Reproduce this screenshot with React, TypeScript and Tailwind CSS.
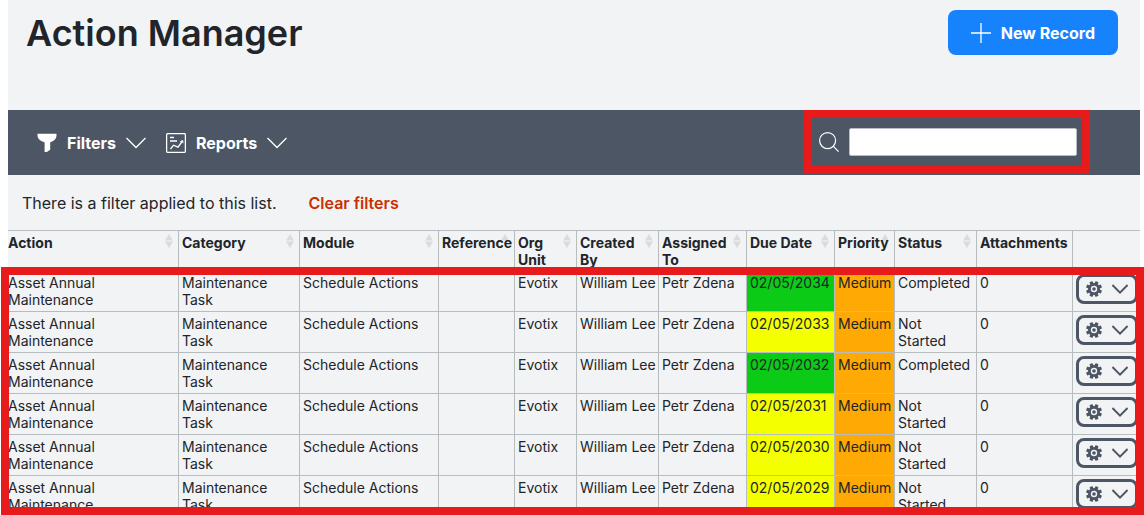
import React from "react";
import clsx from "clsx";

type Sort = "both" | "up" | "none";

const columns: { label: string; width: string; sort: Sort }[] = [
  { label: "Action", width: "w-auto", sort: "both" },
  { label: "Category", width: "w-[121px]", sort: "both" },
  { label: "Module", width: "w-[139px]", sort: "both" },
  { label: "Reference", width: "w-[76px]", sort: "up" },
  { label: "Org Unit", width: "w-[62px]", sort: "both" },
  { label: "Created By", width: "w-[82px]", sort: "both" },
  { label: "Assigned To", width: "w-[88px]", sort: "both" },
  { label: "Due Date", width: "w-[88px]", sort: "both" },
  { label: "Priority", width: "w-[60px]", sort: "up" },
  { label: "Status", width: "w-[82px]", sort: "both" },
  { label: "Attachments", width: "w-[96px]", sort: "none" },
];

const records = [
  { due: "02/05/2034", done: true },
  { due: "02/05/2033", done: false },
  { due: "02/05/2032", done: true },
  { due: "02/05/2031", done: false },
  { due: "02/05/2030", done: false },
  { due: "02/05/2029", done: false },
];

const border = "border-b border-r border-[#b7bcbe] last:border-r-0";
const cell = clsx(border, "p-[3px] align-top");
const headCell = clsx(border, "px-[3px] pt-[3px] pb-[2px] align-top");

const Chevron = ({ className }: { className: string }) => (
  <svg viewBox="0 0 20 20" className={className} fill="none" stroke="currentColor">
    <path d="M0.5 5 10 14.5 19.5 5" />
  </svg>
);

const Funnel = () => (
  <svg viewBox="0 0 20 20" className="size-5" fill="currentColor">
    <path d="M.5.8h19v1.400c0 3.600-2.600 6-6.300 7v7.600L9.800 19H7.600V9.200C3.500 8.200.5 5.800.5 2.200z" />
  </svg>
);

const ReportIcon = () => (
  <svg viewBox="0 0 20 20" className="size-5" fill="none" stroke="currentColor">
    <rect x="0.6" y="0.6" width="18.8" height="18.8" rx="1.2" strokeWidth="1.3" />
    <path d="M4 4.5h4M4 8h7M4.5 16l3-3.8 4.500 2 4.500-6.200" strokeWidth="1.3" />
    <path d="M14.3 8.600 16.700 7.500 17 10.200" />
  </svg>
);

const Gear = () => (
  <svg viewBox="0 0 16 16" className="size-4" fill="currentColor">
    {[22.5, 67.5, 112.5, 157.5].map((a) => (
      <rect key={a} x="6.3" y="0" width="3.4" height="16" rx="0.8" transform={`rotate(${a} 8 8)`} />
    ))}
    <circle cx="8" cy="8" r="6" />
    <circle cx="8" cy="8" r="3.2" fill="#f1f3f5" />
    <circle cx="8" cy="8" r="1.8" />
  </svg>
);

const SortArrows = ({ sort }: { sort: Sort }) => (
  <svg viewBox="0 0 8 14" className="absolute right-[5px] top-[3px] h-3.5 w-2" fill="#dadbdc">
    <path d="M4 0 8 6.500H0z" />
    {sort === "both" && <path d="M0 7.500H8L4 14z" />}
  </svg>
);

const Toolbar = () => (
  <div className="flex h-[65px] shrink-0 items-center justify-between bg-[#4d5665] pl-[29px] pr-[50px] text-white">
    <div className="flex items-center gap-5">
      <button className="flex items-center gap-2.5 font-bold">
        <Funnel />
        Filters
        <Chevron className="size-5 stroke-[1.3]" />
      </button>
      <button className="flex items-center gap-2.5 font-bold">
        <ReportIcon />
        Reports
        <Chevron className="size-5 stroke-[1.3]" />
      </button>
    </div>
    <div className="flex h-16 items-center gap-2.5 self-start border-8 border-[#e71b1b] pl-[7px] pr-[5px]">
      <svg viewBox="0 0 20 20" className="size-5" fill="none" stroke="currentColor" strokeWidth="1.2">
        <circle cx="8.6" cy="8.6" r="8" />
        <path d="M14.2 14.2 19.6 19.6" />
      </svg>
      <input
        type="search"
        aria-label="Search"
        className="h-7 w-[228px] rounded-xs border border-[#b8bdc4] bg-white px-2 text-black outline-none"
      />
    </div>
  </div>
);

const ActionsTable = () => (
  <div className="relative min-h-0 flex-1">
    <div className="h-full overflow-hidden">
      <table className="w-full table-fixed border-separate border-spacing-0 border-t border-[#b7bcbe] text-sm leading-[17px]">
        <thead>
          <tr>
            {columns.map(({ label, width, sort }) => (
              <th
                key={label}
                className={clsx(headCell, width, "relative text-left font-bold first:pl-0")}
              >
                {sort !== "none" && <SortArrows sort={sort} />}
                <span className={clsx("relative block", sort === "both" && "pr-3")}>{label}</span>
              </th>
            ))}
            <th className={clsx(headCell, "w-[67px]")} aria-label="Options" />
          </tr>
        </thead>
        <tbody>
          {records.map(({ due, done }) => (
            <tr key={due} className="h-[41px]">
              <td className={clsx(cell, "first:pl-0")}>
                Asset Annual
                <br />
                Maintenance
              </td>
              <td className={cell}>
                Maintenance
                <br />
                Task
              </td>
              <td className={cell}>Schedule Actions</td>
              <td className={cell} />
              <td className={cell}>Evotix</td>
              <td className={clsx(cell, "whitespace-nowrap")}>William Lee</td>
              <td className={clsx(cell, "whitespace-nowrap")}>Petr Zdena</td>
              <td className={clsx(cell, done ? "bg-[#0bcb16]" : "bg-[#f4ff00]")}>{due}</td>
              <td className={clsx(cell, "bg-[#ffa905]")}>Medium</td>
              <td className={cell}>{done ? "Completed" : "Not Started"}</td>
              <td className={cell}>0</td>
              <td className={cell}>
                <button
                  aria-label="Record options"
                  className="flex h-[30px] w-[62px] items-center gap-2.5 rounded-lg border-3 border-[#4d5665] pl-[7px] text-[#4d5665]"
                >
                  <Gear />
                  <Chevron className="size-4 stroke-[2.5]" />
                </button>
              </td>
            </tr>
          ))}
        </tbody>
      </table>
    </div>
    {/* highlight frame around the records */}
    <div className="pointer-events-none absolute -left-[7px] -right-1 bottom-0 top-[37px] border-8 border-[#e71b1b]" />
  </div>
);

const App = () => {
  return (
    <div className="h-screen overflow-hidden bg-white pl-2 pr-1 font-['Inter','DM_Sans',sans-serif] text-[#212529]">
      <div className="flex h-full flex-col bg-[#f1f3f5]">
        <header className="flex h-[110px] shrink-0 items-start justify-between pl-[18px] pr-[22px] pt-2.5">
          <h1 className="text-4xl leading-[46px] font-semibold">Action Manager</h1>
          <button className="flex h-[45px] items-center gap-2.5 rounded-lg bg-[#1683fd] px-[23px] font-bold text-white">
            <svg viewBox="0 0 20 20" className="size-5" stroke="currentColor" strokeWidth="1.3">
              <path d="M10 0v20M0 10h20" />
            </svg>
            New Record
          </button>
        </header>
        <Toolbar />
        <div className="flex h-[55px] shrink-0 items-center gap-8 pl-3.5">
          <p>There is a filter applied to this list.</p>
          <a href="#" className="font-semibold text-[#c92f00]">
            Clear filters
          </a>
        </div>
        <ActionsTable />
      </div>
    </div>
  );
};

export default App;
